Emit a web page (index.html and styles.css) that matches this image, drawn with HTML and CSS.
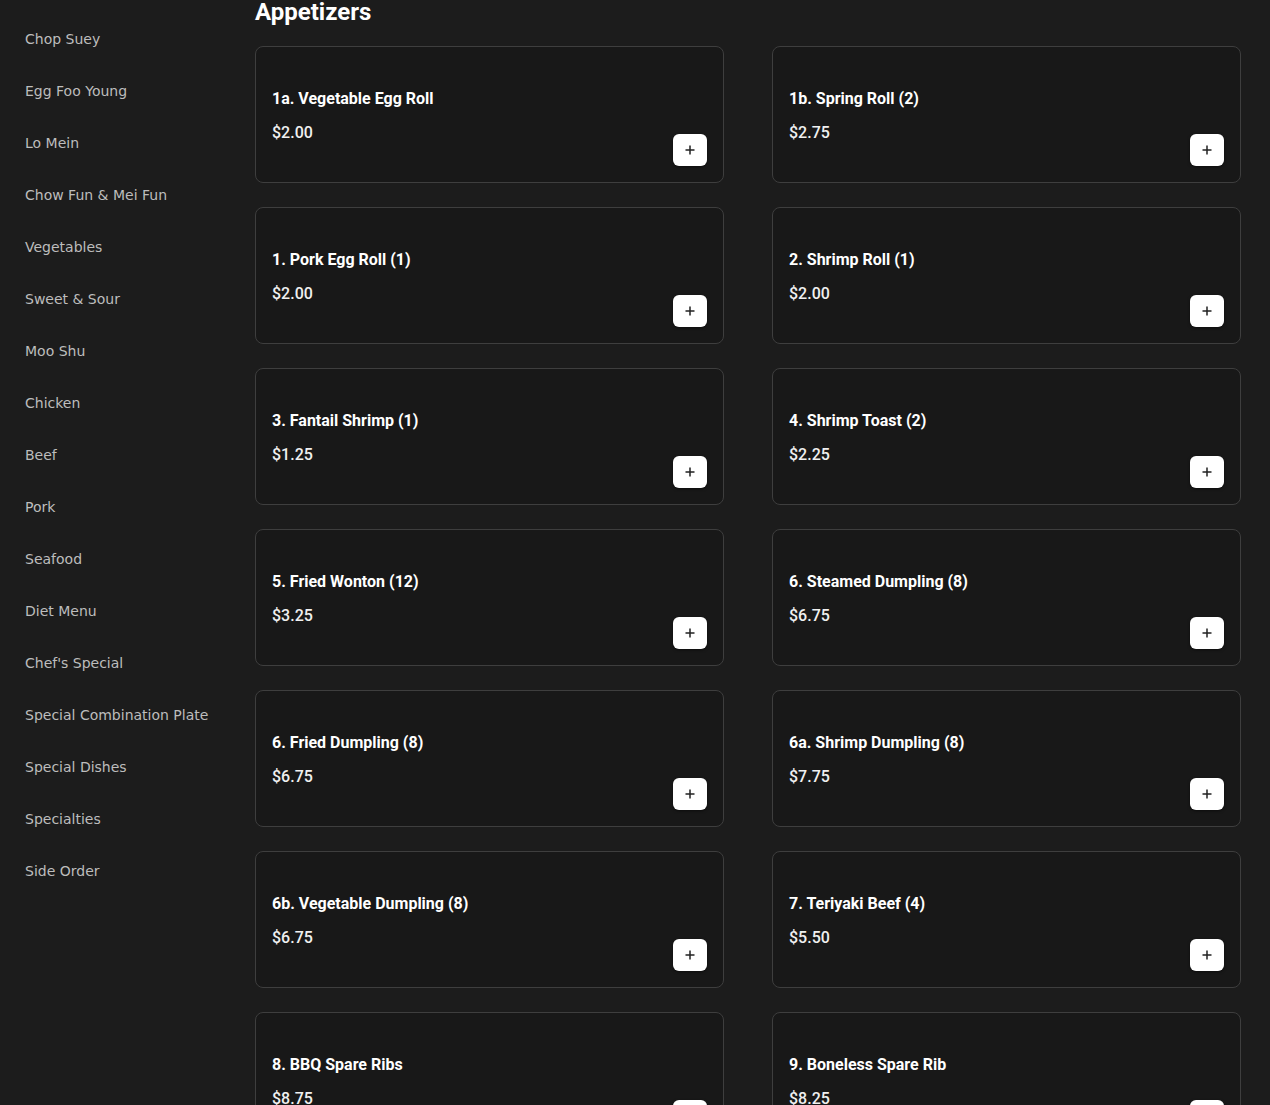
FILE: index.html
```html
<!DOCTYPE html>
<html lang="en">
<head>
<meta charset="utf-8">
<title>Menu</title>
<link rel="stylesheet" href="styles.css">
</head>
<body>
<div class="page">
  <nav class="sidebar">
    <a class="cat">Chop Suey</a>
    <a class="cat">Egg Foo Young</a>
    <a class="cat">Lo Mein</a>
    <a class="cat">Chow Fun &amp; Mei Fun</a>
    <a class="cat">Vegetables</a>
    <a class="cat">Sweet &amp; Sour</a>
    <a class="cat">Moo Shu</a>
    <a class="cat">Chicken</a>
    <a class="cat">Beef</a>
    <a class="cat">Pork</a>
    <a class="cat">Seafood</a>
    <a class="cat">Diet Menu</a>
    <a class="cat">Chef's Special</a>
    <a class="cat">Special Combination Plate</a>
    <a class="cat">Special Dishes</a>
    <a class="cat">Specialties</a>
    <a class="cat">Side Order</a>
  </nav>
  <main class="main">
    <h2 class="section-title">Appetizers</h2>
    <div class="grid">
      <div class="card"><div class="info"><div class="name">1a. Vegetable Egg Roll</div><div class="price">$2.00</div></div><button class="add"><svg viewBox="0 0 12 12" width="12" height="12"><path d="M6 1.5v9M1.5 6h9" stroke="#222" stroke-width="1.5" fill="none"/></svg></button></div>
      <div class="card"><div class="info"><div class="name">1b. Spring Roll (2)</div><div class="price">$2.75</div></div><button class="add"><svg viewBox="0 0 12 12" width="12" height="12"><path d="M6 1.5v9M1.5 6h9" stroke="#222" stroke-width="1.5" fill="none"/></svg></button></div>
      <div class="card"><div class="info"><div class="name">1. Pork Egg Roll (1)</div><div class="price">$2.00</div></div><button class="add"><svg viewBox="0 0 12 12" width="12" height="12"><path d="M6 1.5v9M1.5 6h9" stroke="#222" stroke-width="1.5" fill="none"/></svg></button></div>
      <div class="card"><div class="info"><div class="name">2. Shrimp Roll (1)</div><div class="price">$2.00</div></div><button class="add"><svg viewBox="0 0 12 12" width="12" height="12"><path d="M6 1.5v9M1.5 6h9" stroke="#222" stroke-width="1.5" fill="none"/></svg></button></div>
      <div class="card"><div class="info"><div class="name">3. Fantail Shrimp (1)</div><div class="price">$1.25</div></div><button class="add"><svg viewBox="0 0 12 12" width="12" height="12"><path d="M6 1.5v9M1.5 6h9" stroke="#222" stroke-width="1.5" fill="none"/></svg></button></div>
      <div class="card"><div class="info"><div class="name">4. Shrimp Toast (2)</div><div class="price">$2.25</div></div><button class="add"><svg viewBox="0 0 12 12" width="12" height="12"><path d="M6 1.5v9M1.5 6h9" stroke="#222" stroke-width="1.5" fill="none"/></svg></button></div>
      <div class="card"><div class="info"><div class="name">5. Fried Wonton (12)</div><div class="price">$3.25</div></div><button class="add"><svg viewBox="0 0 12 12" width="12" height="12"><path d="M6 1.5v9M1.5 6h9" stroke="#222" stroke-width="1.5" fill="none"/></svg></button></div>
      <div class="card"><div class="info"><div class="name">6. Steamed Dumpling (8)</div><div class="price">$6.75</div></div><button class="add"><svg viewBox="0 0 12 12" width="12" height="12"><path d="M6 1.5v9M1.5 6h9" stroke="#222" stroke-width="1.5" fill="none"/></svg></button></div>
      <div class="card"><div class="info"><div class="name">6. Fried Dumpling (8)</div><div class="price">$6.75</div></div><button class="add"><svg viewBox="0 0 12 12" width="12" height="12"><path d="M6 1.5v9M1.5 6h9" stroke="#222" stroke-width="1.5" fill="none"/></svg></button></div>
      <div class="card"><div class="info"><div class="name">6a. Shrimp Dumpling (8)</div><div class="price">$7.75</div></div><button class="add"><svg viewBox="0 0 12 12" width="12" height="12"><path d="M6 1.5v9M1.5 6h9" stroke="#222" stroke-width="1.5" fill="none"/></svg></button></div>
      <div class="card"><div class="info"><div class="name">6b. Vegetable Dumpling (8)</div><div class="price">$6.75</div></div><button class="add"><svg viewBox="0 0 12 12" width="12" height="12"><path d="M6 1.5v9M1.5 6h9" stroke="#222" stroke-width="1.5" fill="none"/></svg></button></div>
      <div class="card"><div class="info"><div class="name">7. Teriyaki Beef (4)</div><div class="price">$5.50</div></div><button class="add"><svg viewBox="0 0 12 12" width="12" height="12"><path d="M6 1.5v9M1.5 6h9" stroke="#222" stroke-width="1.5" fill="none"/></svg></button></div>
      <div class="card"><div class="info"><div class="name">8. BBQ Spare Ribs</div><div class="price">$8.75</div></div><button class="add"><svg viewBox="0 0 12 12" width="12" height="12"><path d="M6 1.5v9M1.5 6h9" stroke="#222" stroke-width="1.5" fill="none"/></svg></button></div>
      <div class="card"><div class="info"><div class="name">9. Boneless Spare Rib</div><div class="price">$8.25</div></div><button class="add"><svg viewBox="0 0 12 12" width="12" height="12"><path d="M6 1.5v9M1.5 6h9" stroke="#222" stroke-width="1.5" fill="none"/></svg></button></div>
    </div>
  </main>
</div>
</body>
</html>
```

FILE: styles.css
```css
html, body {
  margin: 0;
  padding: 0;
  background: #1c1c1c;
  overflow: hidden;
}

.page {
  display: flex;
  width: 1270px;
  height: 1105px;
  overflow: hidden;
}

.sidebar {
  width: 230px;
  flex: none;
  padding: 13px 0 0 25px;
  display: flex;
  flex-direction: column;
}

.cat {
  display: block;
  padding: 18px 0;
  font-family: "DejaVu Sans", sans-serif;
  font-size: 14px;
  line-height: 16px;
  color: #bdbdbd;
  white-space: nowrap;
}

.main {
  flex: 1;
  padding: 0 29px 0 0;
  font-family: Roboto, "Liberation Sans", sans-serif;
}

.section-title {
  margin: 0 0 22px;
  font-size: 24px;
  line-height: 24px;
  font-weight: 700;
  color: #ffffff;
}

.grid {
  display: grid;
  grid-template-columns: 1fr 1fr;
  column-gap: 48px;
  row-gap: 24px;
}

.card {
  box-sizing: border-box;
  height: 137px;
  border: 1px solid #3e3e3e;
  border-radius: 8px;
  background: #181818;
  padding: 40px 16px 16px 16px;
  display: grid;
  grid-template-columns: 1fr auto;
}

.info {
  align-self: start;
  display: flex;
  flex-direction: column;
  gap: 10px;
}

.name {
  font-size: 16px;
  line-height: 24px;
  font-weight: 700;
  color: #ffffff;
}

.price {
  font-size: 16px;
  line-height: 24px;
  font-weight: 500;
  color: #f0f0f0;
}

.add {
  align-self: end;
  width: 34px;
  height: 32px;
  padding: 0;
  border: none;
  border-radius: 6px;
  background: #ffffff;
  display: flex;
  align-items: center;
  justify-content: center;
  box-shadow: 0 1px 3px rgba(0, 0, 0, 0.5);
}

.add svg {
  display: block;
}
```
